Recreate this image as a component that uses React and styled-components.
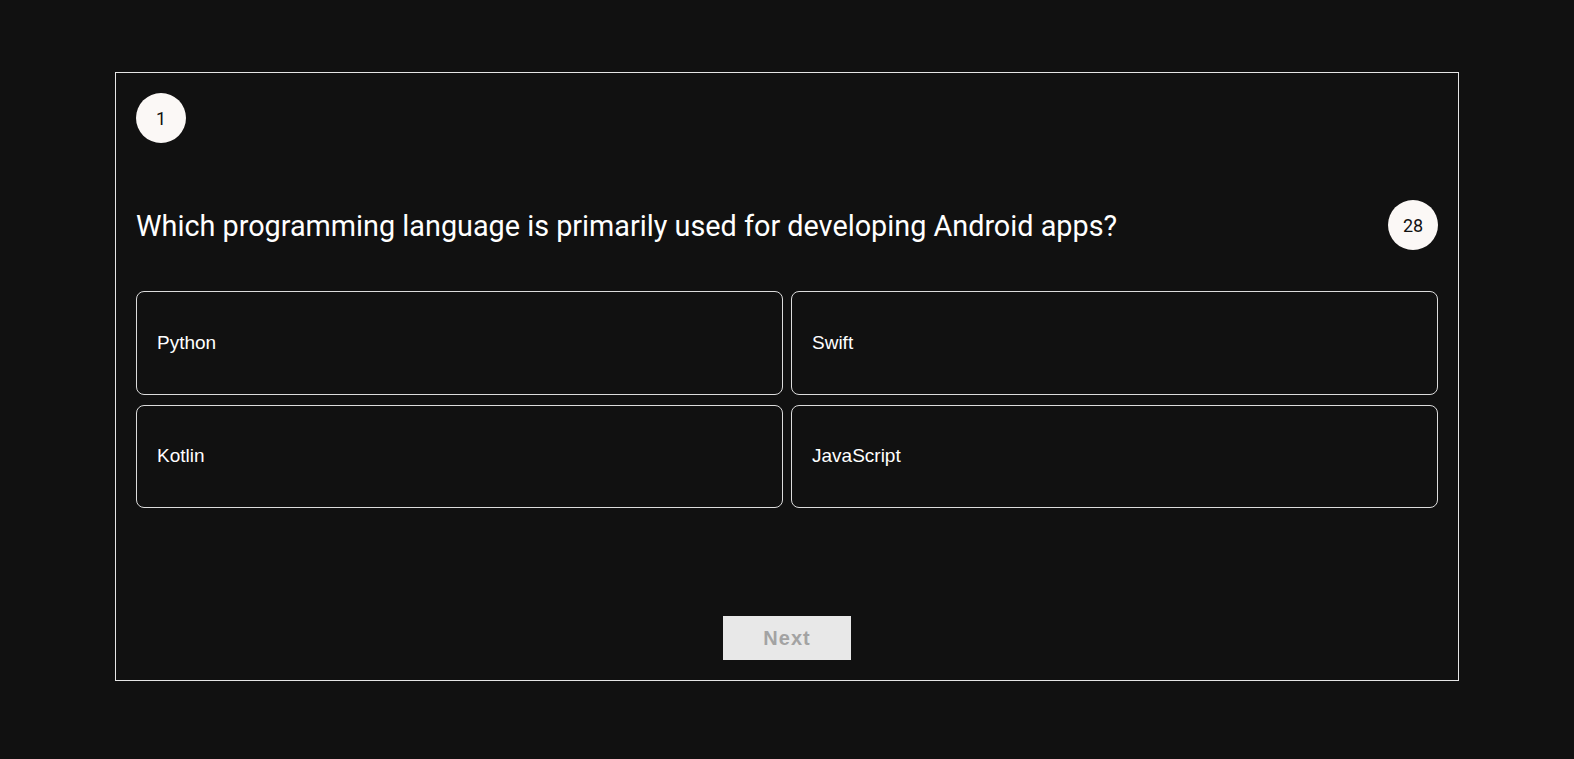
import React, { useState } from 'react';
import styled, { createGlobalStyle } from 'styled-components';

const GlobalStyle = createGlobalStyle`
  body {
    margin: 0;
    background: #111111;
    font-family: Roboto, "Liberation Sans", sans-serif;
  }
`;

const Page = styled.div`
  padding-top: 72px;
  display: flex;
  justify-content: center;
`;

const Card = styled.div`
  width: 1344px;
  height: 609px;
  box-sizing: border-box;
  border: 1px solid #e6e6e6;
  padding: 20px;
  display: flex;
  flex-direction: column;
  color: #fff;
`;

const Badge = styled.div`
  width: 50px;
  height: 50px;
  flex: none;
  border-radius: 50%;
  background: #fbf8f6;
  color: #111;
  display: flex;
  align-items: center;
  justify-content: center;
  font-size: 18px;
  font-family: Roboto, sans-serif;
`;

const QuestionRow = styled.div`
  margin-top: 57px;
  display: flex;
  align-items: center;
  justify-content: space-between;
`;

const Question = styled.h2`
  margin: 1px 0 0;
  font-weight: 400;
  font-size: 28.8px;
  font-family: Roboto, sans-serif;
`;

const Options = styled.div`
  margin-top: 41px;
  display: grid;
  grid-template-columns: 1fr 1fr;
  gap: 10px 8px;
`;

const Option = styled.button`
  height: 103.5px;
  box-sizing: border-box;
  border: 1px solid ${p => (p.$active ? '#ffffff' : '#dcdcdc')};
  border-radius: 8px;
  background: ${p => (p.$active ? '#222' : '#111')};
  color: #fff;
  text-align: left;
  padding: 0 20px;
  font-family: "Liberation Sans", Arial, sans-serif;
  font-size: 19px;
  cursor: pointer;
`;

const Footer = styled.div`
  margin-top: auto;
  display: flex;
  justify-content: center;
`;

const NextButton = styled.button`
  width: 128px;
  height: 44px;
  border: none;
  background: #e8e8e8;
  color: #a3a3a3;
  font-family: "Liberation Sans", Arial, sans-serif;
  font-weight: 700;
  font-size: 20px;
  letter-spacing: 1px;
`;

const answers = ['Python', 'Swift', 'Kotlin', 'JavaScript'];

const App = () => {
  const [picked, setPicked] = useState(null);
  return (
    <Page>
      <GlobalStyle />
      <Card>
        <Badge>1</Badge>
        <QuestionRow>
          <Question>Which programming language is primarily used for developing Android apps?</Question>
          <Badge>28</Badge>
        </QuestionRow>
        <Options>
          {answers.map(a => (
            <Option key={a} $active={picked === a} onClick={() => setPicked(a)}>
              {a}
            </Option>
          ))}
        </Options>
        <Footer>
          <NextButton disabled={!picked}>Next</NextButton>
        </Footer>
      </Card>
    </Page>
  );
};

export default App;
